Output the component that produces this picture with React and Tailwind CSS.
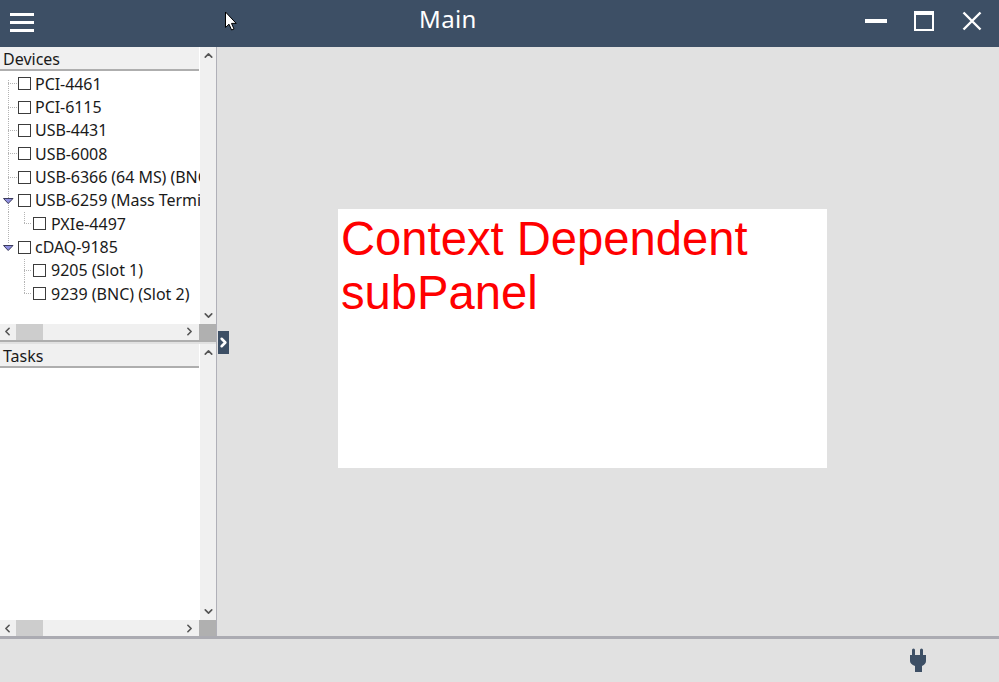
import React from 'react';
import { ChevronUp, ChevronDown, ChevronLeft, ChevronRight } from 'lucide-react';

const devices = [
  { name: 'PCI-4461', level: 1, line: 'mid' },
  { name: 'PCI-6115', level: 1, line: 'mid' },
  { name: 'USB-4431', level: 1, line: 'mid' },
  { name: 'USB-6008', level: 1, line: 'mid' },
  { name: 'USB-6366 (64 MS) (BNC)', level: 1, line: 'mid' },
  { name: 'USB-6259 (Mass Termination)', level: 1, line: 'mid', open: true },
  { name: 'PXIe-4497', level: 2, line: 'through', childLine: 'end' },
  { name: 'cDAQ-9185', level: 1, line: 'end', open: true },
  { name: '9205 (Slot 1)', level: 2, childLine: 'mid' },
  { name: '9239 (BNC) (Slot 2)', level: 2, childLine: 'end' },
];

// tree connectors and expander triangle
const Gutter = ({ item, first }) => (
  <svg width="33" height="23" viewBox="0 0 33 23" className="shrink-0">
    <g stroke="#b4b4b4" strokeDasharray="1 1" fill="none">
      {item.line && <path d={`M8.5 ${first ? 8 : 0}V${item.line === 'end' ? 8 : 23}`} />}
      {item.level === 1 && !item.open && <path d="M8 11.5H17" />}
      {item.childLine && <path d={`M24.5 0V${item.childLine === 'end' ? 11 : 23}M24 11.5H32`} />}
    </g>
    {item.open && <path d="M3.5 9.5H13L8.2 14.5Z" fill="#8f8fe0" stroke="#3b3b5c" strokeWidth="1" />}
  </svg>
);

const TreeRow = ({ item, first }) => (
  <div className="flex items-center h-[23.35px] whitespace-nowrap">
    <Gutter item={item} first={first} />
    <div className={item.level === 1 ? 'flex items-center -ml-[15.5px]' : 'flex items-center'}>
      <div className="w-[13px] h-[13px] border border-[#3c3c3c] bg-white shrink-0" />
      <span className={item.level === 1 ? 'ml-[4.5px] text-[16px] tracking-[-0.05px] text-[#1a1a1a]' : 'ml-[5px] text-[16px] text-[#1a1a1a]'}>{item.name}</span>
    </div>
  </div>
);

const Pane = ({ title, children }) => (
  <div className="flex-1 grid grid-cols-[200px_16px] grid-rows-[1fr_16px] min-h-0 bg-white">
    <div className="overflow-hidden min-w-0 min-h-0">
      <div className="h-[24px] mr-[1px] bg-[#f0f0f0] border-b-2 border-[#aeaeae] px-[3px] text-[16px] leading-[25px] text-[#1a1a1a] mb-[1px]">
        {title}
      </div>
      {children}
    </div>
    <div className="bg-[#f0f0f0] flex flex-col justify-between items-center py-[2px]">
      <ChevronUp size={13} strokeWidth={3} className="text-[#555555]" />
      <ChevronDown size={13} strokeWidth={3} className="text-[#555555]" />
    </div>
    <div className="bg-[#f0f0f0] flex items-center justify-between pl-[1px] pr-[1px]">
      <ChevronLeft size={13} strokeWidth={3} className="text-[#555555]" />
      <div className="w-[27px] h-full bg-[#cdcdcd] mr-auto ml-[2px]" />
      <ChevronRight size={13} strokeWidth={3} className="text-[#555555] mr-[3px]" />
    </div>
    <div className="bg-[#b0b0b0] -ml-[1px]" />
  </div>
);

export default function App() {
  return (
    <div className="relative w-[999px] h-[682px] overflow-hidden flex flex-col bg-[#e1e1e1] font-['Noto_Sans',sans-serif]">
      {/* title bar */}
      <div className="h-[47px] shrink-0 bg-[#3d4f65] flex items-center text-white">
        <div className="ml-[10px] w-[24px] flex flex-col gap-[5px] -mt-[3px]">
          <div className="h-[3px] bg-white" />
          <div className="h-[3px] bg-white" />
          <div className="h-[3px] bg-white" />
        </div>
        <div className="ml-[385px] text-[24px] leading-[38px] tracking-[0.4px] -mt-[9px]">Main</div>
        <div className="ml-auto flex items-center">
          <div className="w-[22px] h-[4px] bg-white mr-[27px] -mt-[5px]" />
          <div className="w-[20px] h-[20px] border-2 border-t-4 border-white mr-[28px] -mt-[5px]" />
          <svg width="20" height="20" viewBox="0 0 20 20" className="mr-[17px] -mt-[5px]">
            <path d="M1.5 1.5L18.5 18.5M18.5 1.5L1.5 18.5" stroke="#ffffff" strokeWidth="2.4" fill="none" />
          </svg>
        </div>
      </div>

      {/* body */}
      <div className="flex-1 flex min-h-0">
        <div className="w-[217px] shrink-0 flex flex-col border-r border-[#b0b0b8]">
          <Pane title="Devices">
            {devices.map((d, i) => (
              <TreeRow key={d.name} item={d} first={i === 0} />
            ))}
          </Pane>
          <div className="h-[2px] shrink-0 bg-[#aeaeae] mb-[2px]" />
          <Pane title="Tasks" />
        </div>
        <div className="flex-1 pl-[121px] pt-[162px]">
          <div className="w-[489px] h-[259px] bg-white px-[3px] pt-[3px] font-['Liberation_Sans',sans-serif] text-[47.2px] leading-[54px] text-[#ff0000]">
            Context Dependent subPanel
          </div>
        </div>
      </div>

      {/* status bar */}
      <div className="h-[46px] shrink-0 border-t-[3px] border-[#ababb2] flex items-center justify-end pr-[72px]">
        <svg width="18" height="25" viewBox="0 0 18 25">
          <path d="M3 2a1.5 1.5 0 0 1 3 0V7h5V2a1.5 1.5 0 0 1 3 0V7h3v6q0 3-4 5v6H6v-6q-5-2-5-5V7h2Z" fill="#3d4f65" />
        </svg>
      </div>

      {/* splitter toggle over the pane edge */}
      <div className="absolute left-[218px] top-[331px] w-[11px] h-[23px] bg-[#3d4f65] flex items-center justify-center">
        <ChevronRight size={15} strokeWidth={4} className="text-white shrink-0" />
      </div>

      {/* mouse pointer */}
      <svg className="absolute left-[224px] top-[11px]" width="14" height="21" viewBox="0 0 14 21">
        <path d="M1.5 1V16.5L5 13.2L7.6 19L10 18L7.5 12.4H12.2Z" fill="#ffffff" stroke="#000000" strokeWidth="1" />
      </svg>
    </div>
  );
}
